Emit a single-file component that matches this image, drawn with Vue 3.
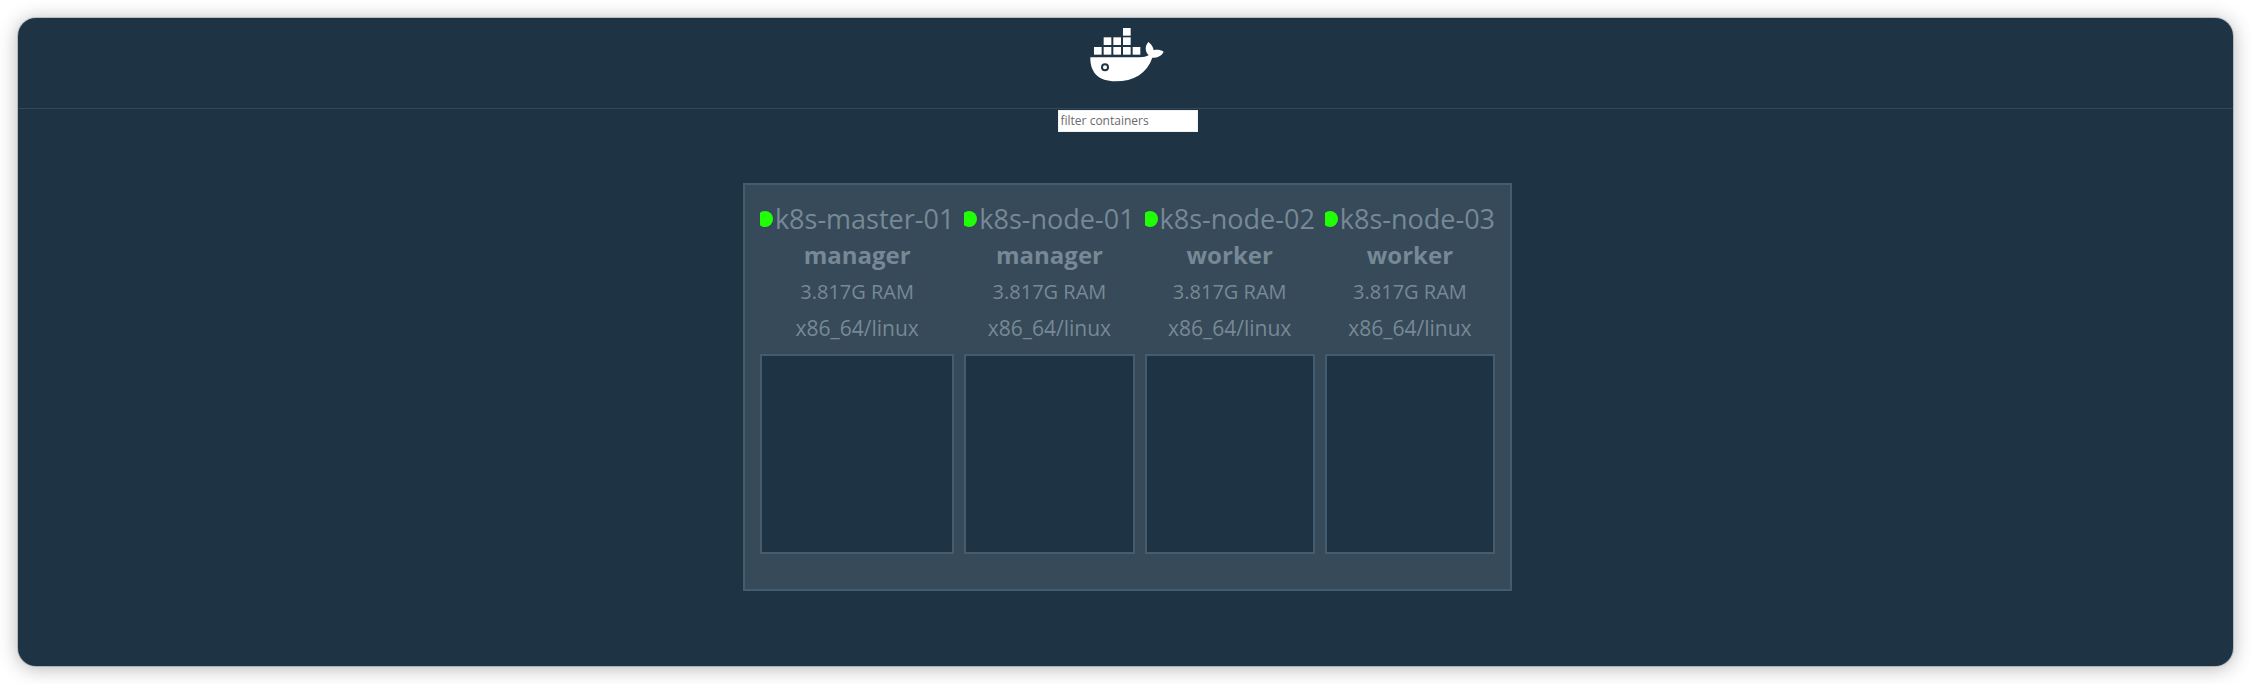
<script setup>
import { ref, computed } from 'vue'

const filter = ref('')
const nodes = [
  { name: 'k8s-master-01', role: 'manager', ram: '3.817G RAM', platform: 'x86_64/linux', containers: [] },
  { name: 'k8s-node-01', role: 'manager', ram: '3.817G RAM', platform: 'x86_64/linux', containers: [] },
  { name: 'k8s-node-02', role: 'worker', ram: '3.817G RAM', platform: 'x86_64/linux', containers: [] },
  { name: 'k8s-node-03', role: 'worker', ram: '3.817G RAM', platform: 'x86_64/linux', containers: [] }
]
const visibleNodes = computed(() =>
  nodes.map((n) => ({ ...n, containers: n.containers.filter((c) => c.includes(filter.value)) }))
)
const crates = [
  [249, 83],
  [191, 111], [220, 111], [249, 111],
  [162, 140], [191, 140], [220, 140], [249, 140], [278, 140]
]
</script>

<template>
  <div class="page">
    <div class="window">
      <header class="header">
        <svg class="logo" viewBox="150 80 225 165" role="img" aria-label="Docker">
          <rect v-for="([x, y], i) in crates" :key="i" :x="x" :y="y" width="23" height="23" />
          <path
            d="M151 171H300C310 171 319 169 326 165C315 153 314 138 325 125C334 132 340 140 341 150C351 147 362 149 371 154C365 166 354 172 337 172C321 219 282 243 226 243C176 243 150 217 151 171Z"
          />
          <circle class="eye" cx="195" cy="201" r="12" />
          <circle cx="195" cy="201" r="6" />
        </svg>
      </header>
      <main class="main">
        <input v-model="filter" class="filter" type="text" placeholder="filter containers" aria-label="filter containers" />
        <section class="cluster">
          <article v-for="node in visibleNodes" :key="node.name" class="node">
            <h2 class="name"><span class="dot"></span>{{ node.name }}</h2>
            <strong class="role">{{ node.role }}</strong>
            <span class="ram">{{ node.ram }}</span>
            <span class="platform">{{ node.platform }}</span>
            <ul class="containers">
              <li v-for="c in node.containers" :key="c">{{ c }}</li>
            </ul>
          </article>
        </section>
      </main>
    </div>
  </div>
</template>

<style>
body {
  margin: 0;
  background: #fff;
}
</style>

<style scoped>
.page {
  box-sizing: border-box;
  display: flex;
  min-height: 100vh;
  padding: 18px;
  overflow: hidden;
  font-family: "Open Sans", "Noto Sans", sans-serif;
  color: #778995;
}
.window {
  flex: 1;
  border-radius: 18px;
  background: #1e3444;
  box-shadow: 0 0 0 1px rgba(30, 52, 69, 0.2), 0 2px 20px rgba(0, 0, 0, 0.3);
}
.header {
  box-sizing: border-box;
  display: flex;
  justify-content: center;
  height: 91px;
  padding: 9px 0 0 3px;
  border-bottom: 1px solid #30495a;
}
.logo {
  width: 75px;
  height: 55px;
  fill: #fff;
}
.eye {
  fill: #1e3444;
}
.main {
  display: flex;
  flex-direction: column;
  align-items: center;
  padding: 1px 0 20px 4px;
}
.filter {
  box-sizing: border-box;
  width: 140px;
  height: 22px;
  padding: 0 2px 1px;
  border: 1px solid #f2f2f2;
  border-radius: 0;
  background: #fff;
  color: #333;
  font: 12px/19px "Open Sans", "Noto Sans", sans-serif;
}
.filter::placeholder {
  color: #6a6a6a;
  opacity: 1;
}
.cluster {
  display: flex;
  gap: 10px;
  margin-top: 51px;
  padding: 15px 15px 35px;
  border: 2px solid #435c70;
  background: #364a5a;
}
.node {
  display: flex;
  flex-direction: column;
  align-items: center;
}
.name {
  display: flex;
  align-items: center;
  margin: 0;
  overflow: hidden;
  font-size: 27px;
  font-weight: 400;
  line-height: 37px;
  white-space: nowrap;
}
.dot {
  flex: none;
  width: 16px;
  height: 16px;
  margin: 0 2px 0 -3px;
  border-radius: 50%;
  background: #21ff06;
}
.role {
  font-size: 24px;
  line-height: 36px;
}
.ram {
  font-size: 20px;
  line-height: 38px;
}
.platform {
  font-size: 21px;
  line-height: 34px;
}
.containers {
  box-sizing: border-box;
  align-self: stretch;
  height: 200px;
  margin: 9px 0 0;
  padding: 0;
  border: 2px solid #435c70;
  background: #1e3444;
  list-style: none;
}
</style>
